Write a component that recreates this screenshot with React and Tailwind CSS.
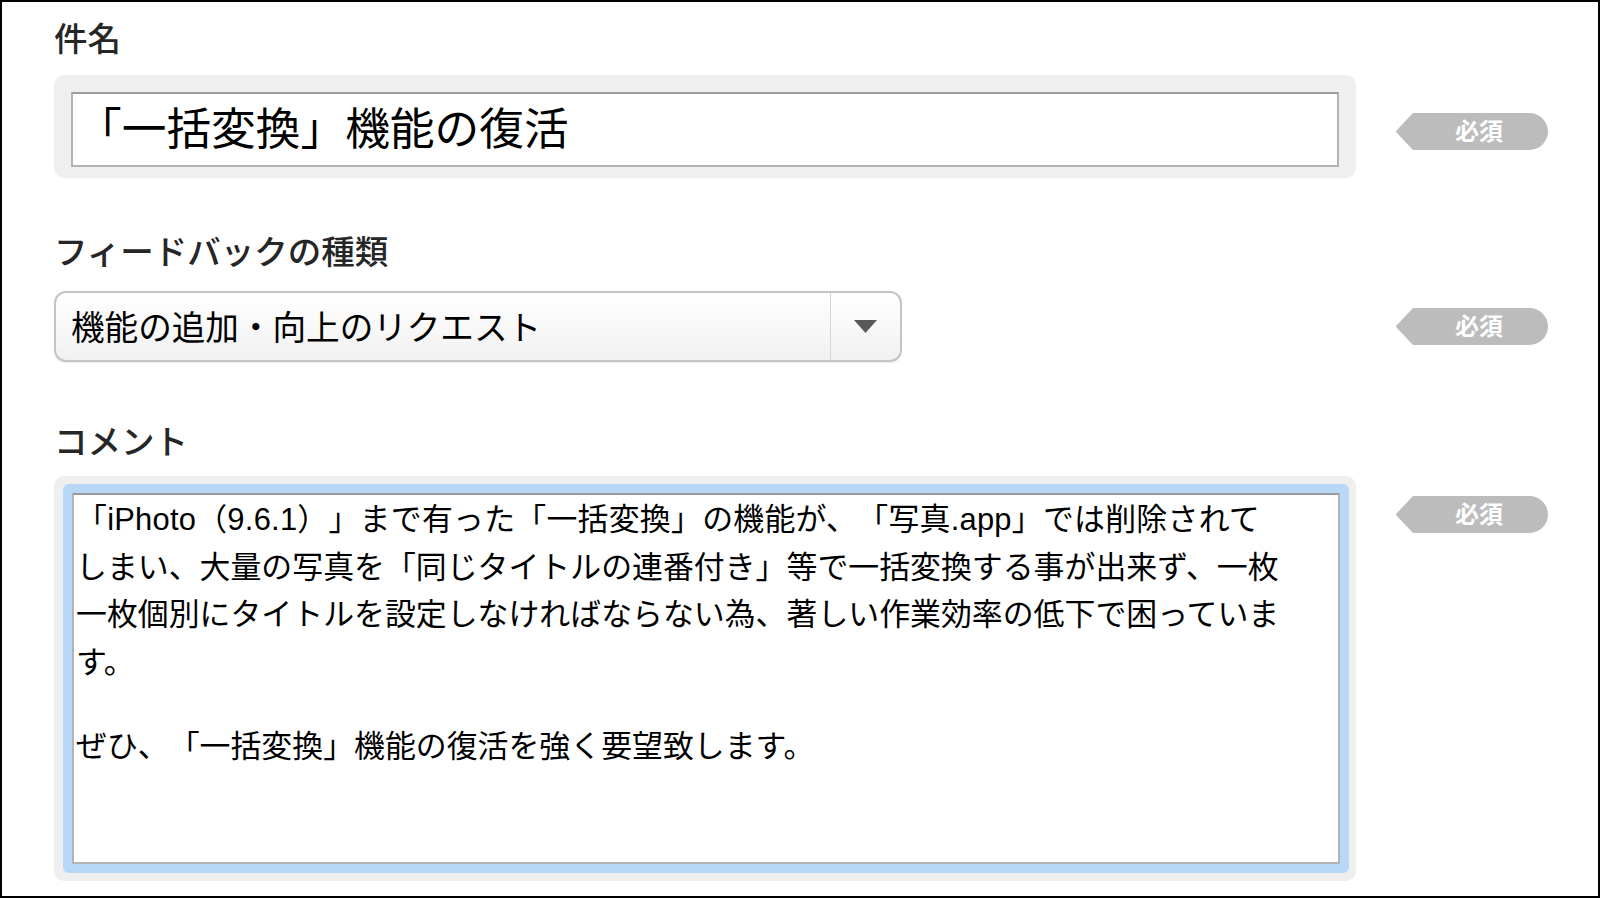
import React from 'react';

const FONT = "font-['Liberation_Sans','Noto_Sans_CJK_JP',sans-serif] [text-spacing-trim:space-all]";

// grey "必須" tag with a pointed left end
const RequiredTag = ({ className = '' }) => (
    <div className={`flex h-[37px] items-stretch ${className}`}>
        <svg width="18" height="37" viewBox="0 0 18 37" className="block">
            <path d="M18 0 L18 37 L1.5 19.5 Q0.5 18.5 1.5 17.5 Z" fill="#bcbcbc" />
        </svg>
        <div className="flex w-[135px] items-center justify-center rounded-r-full bg-[#bcbcbc] pr-[3px] text-[24px] font-bold leading-none text-white">
            必須
        </div>
    </div>
);

const Label = ({ children, className = '' }) => (
    <div className={`h-[40px] text-[33.5px] font-medium leading-[40px] text-[#262626] ${className}`}>{children}</div>
);

const commentLines = [
    '「iPhoto（9.6.1）」まで有った「一括変換」の機能が、「写真.app」では削除されて',
    'しまい、大量の写真を「同じタイトルの連番付き」等で一括変換する事が出来ず、一枚',
    '一枚個別にタイトルを設定しなければならない為、著しい作業効率の低下で困っていま',
    'す。',
    '',
    'ぜひ、「一括変換」機能の復活を強く要望致します。',
];

export default function App() {
    return (
        <div className={`box-border h-[898px] w-[1600px] overflow-hidden border-2 border-black bg-white pl-[52px] pt-[18px] ${FONT}`}>

            {/* 件名 */}
            <Label>件名</Label>
            <div className="mt-[15px] flex items-start">
                <div className="w-[1302px] rounded-[10px] bg-[#efefef] pb-[11px] pl-[17px] pr-[17px] pt-[17px]">
                    <div className="h-[75px] w-[1268px] border-2 border-[#b3b3b3] border-t-[#9c9c9c] bg-white pl-[4px] pt-[10px] text-[44.7px] leading-[52px] text-black">
                        「一括変換」機能の復活
                    </div>
                </div>
                <RequiredTag className="ml-[39px] mt-[38px]" />
            </div>

            {/* フィードバックの種類 */}
            <Label className="mt-[55px]">フィードバックの種類</Label>
            <div className="mt-[18px] flex items-start">
                <div className="w-[1302px]">
                    <div className="flex h-[71px] w-[848px] overflow-hidden rounded-[12px] border-2 border-[#c4c4c4] bg-gradient-to-b from-white to-[#f1f1f1] shadow-[0_1px_1px_rgba(0,0,0,0.08)]">
                        <div className="flex flex-1 items-center pl-[15px] pt-[5px] text-[33.6px] leading-[44px] text-black">
                            機能の追加・向上のリクエスト
                        </div>
                        <div className="flex w-[70px] items-center justify-center border-l border-[#d6d6d6]">
                            <svg width="23" height="13" viewBox="0 0 23 13">
                                <path d="M0 0 H23 L11.5 13 Z" fill="#595959" />
                            </svg>
                        </div>
                    </div>
                </div>
                <RequiredTag className="ml-[39px] mt-[17px]" />
            </div>

            {/* コメント */}
            <Label className="mt-[61px]">コメント</Label>
            <div className="mt-[13px] flex items-start">
                <div className="w-[1302px] rounded-[10px] bg-[#efefef] pb-[8px] pl-[9px] pr-[7px] pt-[8px]">
                    <div className="rounded-[6px] bg-[#b9d7f6] p-[9px]">
                        <div className="h-[371px] w-[1268px] border-2 border-[#b3b3b3] border-t-[#9c9c9c] bg-white pl-[2px] pt-[1px] text-[30.9px] leading-[47.6px] text-black">
                            {commentLines.map((line, i) => (
                                <div key={i} className={`whitespace-nowrap ${line ? 'h-[47.6px]' : 'h-[37px]'} ${i === 0 ? 'tracking-[0.25px]' : ''}`}>{line}</div>
                            ))}
                        </div>
                    </div>
                </div>
                <RequiredTag className="ml-[39px] mt-[20px]" />
            </div>
        </div>
    );
}
